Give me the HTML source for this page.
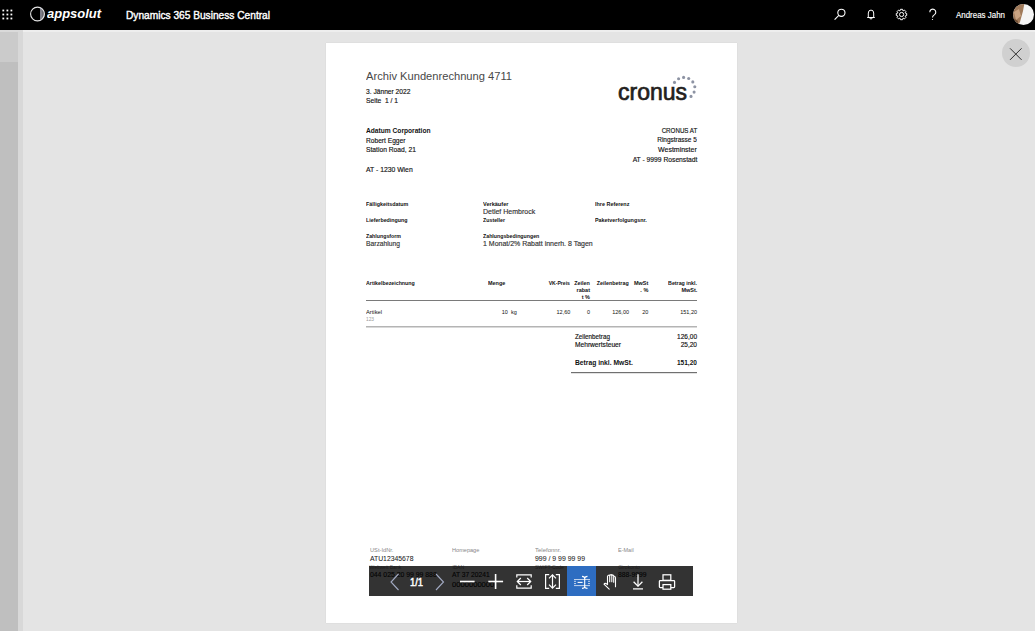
<!DOCTYPE html>
<html><head><meta charset="utf-8">
<style>
*{margin:0;padding:0;box-sizing:border-box}
html,body{width:1035px;height:631px;overflow:hidden;background:#e4e4e4;font-family:"Liberation Sans",sans-serif;color:#1e1e1e}
.a{position:absolute}
.t{position:absolute;white-space:pre;line-height:1.1172;color:#111;-webkit-text-stroke:0.15px currentColor}
#hdr{left:0;top:0;width:1035px;height:30px;background:#000}
</style></head><body>
<div class="a" id="hdr"></div>
<div class="a" style="left:23px;top:30px;width:1012px;height:2px;background:#eeeeee"></div>
<div class="a" style="left:0;top:30px;width:23px;height:2px;background:#dadada"></div>
<div class="a" style="left:0;top:32px;width:17.5px;height:30px;background:#cbcbcb"></div>
<div class="a" style="left:0;top:62px;width:17.5px;height:569px;background:#bfbfbf"></div>
<div class="a" style="left:17.5px;top:32px;width:5.5px;height:599px;background:#d8d8d8"></div>
<!-- page -->
<div class="a" style="left:326px;top:43px;width:411px;height:580px;background:#fff;box-shadow:0 0 1px rgba(0,0,0,0.12)"></div>
<!-- close -->
<div class="a" style="left:1001.6px;top:39.2px;width:28px;height:28px;border-radius:50%;background:#d0d0d0"></div>
<svg class="a" style="left:0;top:0" width="1035" height="631">
  <g stroke="#2e2e2e" stroke-width="1" fill="none">
    <line x1="1010" y1="48.3" x2="1021.6" y2="59.9"/><line x1="1021.6" y1="48.3" x2="1010" y2="59.9"/>
  </g>
  <!-- waffle -->
  <g fill="#fff"><rect x="2.4" y="9.6" width="1.8" height="1.8"/><rect x="6.5" y="9.6" width="1.8" height="1.8"/><rect x="10.5" y="9.6" width="1.8" height="1.8"/><rect x="2.4" y="13.6" width="1.8" height="1.8"/><rect x="6.5" y="13.6" width="1.8" height="1.8"/><rect x="10.5" y="13.6" width="1.8" height="1.8"/><rect x="2.4" y="17.6" width="1.8" height="1.8"/><rect x="6.5" y="17.6" width="1.8" height="1.8"/><rect x="10.5" y="17.6" width="1.8" height="1.8"/></g>
  <!-- appsolut circle -->
  <path d="M40.8 7.7 A7 7 0 0 1 40.8 20.3 Z" fill="#6a6a70"/>
  <circle cx="37.5" cy="14" r="6.9" stroke="#e6e6e6" stroke-width="1.1" fill="none"/>
  <line x1="40.8" y1="7.6" x2="40.8" y2="20.4" stroke="#b8bccc" stroke-width="0.9"/>
  <!-- search -->
  <g stroke="#fff" stroke-width="1.1" fill="none">
    <circle cx="841.4" cy="12.8" r="3.6"/>
    <line x1="838.8" y1="15.4" x2="834.6" y2="19.6"/>
  </g>
  <!-- bell -->
  <g stroke="#fff" stroke-width="1" fill="none">
    <path d="M867.2 17.5 L874.8 17.5 M868.3 17.5 L868.3 13 A2.7 2.9 0 0 1 873.7 13 L873.7 17.5"/>
    <path d="M869.8 17.8 A1.2 1.2 0 0 0 872.2 17.8"/>
  </g>
  <!-- gear -->
  <g stroke="#fff" stroke-width="1" fill="none">
    <path d="M906.69 13.45 L906.69 15.55 L905.24 15.91 L905.14 16.15 L905.92 17.43 L904.43 18.92 L903.15 18.14 L902.91 18.24 L902.55 19.69 L900.45 19.69 L900.09 18.24 L899.85 18.14 L898.57 18.92 L897.08 17.43 L897.86 16.15 L897.76 15.91 L896.31 15.55 L896.31 13.45 L897.76 13.09 L897.86 12.85 L897.08 11.57 L898.57 10.08 L899.85 10.86 L900.09 10.76 L900.45 9.31 L902.55 9.31 L902.91 10.76 L903.15 10.86 L904.43 10.08 L905.92 11.57 L905.14 12.85 L905.24 13.09 Z"/>
    <circle cx="901.6" cy="14.5" r="2.1"/>
  </g>
  <!-- help -->
  <g stroke="#fff" stroke-width="1.1" fill="none">
    <path d="M929.8 12.2 A3 3 0 1 1 934.5 14.6 Q932.5 15.8 932.5 17.5"/>
  </g>
  <circle cx="932.5" cy="19.5" r="0.6" fill="#fff"/>
  <!-- avatar -->
  <defs><clipPath id="av"><circle cx="1023.5" cy="14.5" r="10.5"/></clipPath></defs>
  <g clip-path="url(#av)">
    <rect x="1012" y="3" width="23" height="23" fill="#f4f4f4"/>
    <path d="M1012 3 L1024.5 3 L1023 11 L1020 22 L1018 26 L1012 26 Z" fill="#a07a5a"/>
    <path d="M1014 12 L1019 9 L1021 16 L1016 20 Z" fill="#c9a382"/>
    <path d="M1013 18 L1018 21 L1017 26 L1012 26 Z" fill="#6e4d33"/>
  </g>
  <!-- cronus dots -->
  <g fill="#8d93a3">
    <circle cx="674.5" cy="82.4" r="1.55"/><circle cx="678.6" cy="78.8" r="1.55"/><circle cx="683.6" cy="77.4" r="1.55"/><circle cx="688.7" cy="78.5" r="1.55"/>
    <circle cx="692.8" cy="81.9" r="1.55"/><circle cx="694.8" cy="86.7" r="1.55"/><circle cx="694.1" cy="92.1" r="1.55"/><circle cx="691" cy="96.4" r="1.55"/>
  </g>
  <!-- table lines -->
  <rect x="366" y="300" width="331" height="1" fill="#7a7a7a"/>
  <rect x="366" y="326" width="331" height="1.5" fill="#b4b4b4"/>
  <rect x="571" y="372" width="126" height="1.2" fill="#707070"/>
</svg>
<div class="t" style="top:8.83px;font-size:10.8px;color:#fff;-webkit-text-stroke:0.4px #fff;left:126.00px;transform:scaleX(0.941);transform-origin:0 0;">Dynamics 365 Business Central</div>
<div class="t" style="top:9.66px;font-size:9px;color:#fff;left:956.00px;transform:scaleX(0.882);transform-origin:0 0;">Andreas Jahn</div>
<div class="t" style="top:6.52px;font-size:12.8px;font-weight:700;font-style:italic;color:#fff;-webkit-text-stroke:0;left:46.90px;transform:scaleX(1.013);transform-origin:0 0;">appsolut</div>
<div class="t" style="top:69.55px;font-size:11px;color:#484848;-webkit-text-stroke:0;left:366.00px;transform:scaleX(1.013);transform-origin:0 0;">Archiv Kundenrechnung 4711</div>
<div class="t" style="top:87.87px;font-size:7px;left:366.00px;transform:scaleX(0.951);transform-origin:0 0;">3. Jänner 2022</div>
<div class="t" style="top:97.17px;font-size:7px;left:366.00px;transform:scaleX(0.956);transform-origin:0 0;">Seite  1 / 1</div>
<div class="t" style="top:78.51px;font-size:23.3px;color:#231f20;-webkit-text-stroke:0.7px #231f20;left:618.00px;transform:scaleX(0.987);transform-origin:0 0;">cronus</div>
<div class="t" style="top:126.67px;font-size:7px;font-weight:700;-webkit-text-stroke:0;left:366.00px;transform:scaleX(0.948);transform-origin:0 0;">Adatum Corporation</div>
<div class="t" style="top:136.56px;font-size:7px;left:366.00px;transform:scaleX(0.946);transform-origin:0 0;">Robert Egger</div>
<div class="t" style="top:146.06px;font-size:7px;left:366.00px;transform:scaleX(0.959);transform-origin:0 0;">Station Road, 21</div>
<div class="t" style="top:166.36px;font-size:7px;left:366.00px;transform:scaleX(0.973);transform-origin:0 0;">AT - 1230 Wien</div>
<div class="t" style="top:126.67px;font-size:7px;right:338.00px;transform:scaleX(0.885);transform-origin:100% 0;">CRONUS AT</div>
<div class="t" style="top:135.86px;font-size:7px;right:338.00px;transform:scaleX(0.925);transform-origin:100% 0;">Ringstrasse 5</div>
<div class="t" style="top:145.86px;font-size:7px;right:338.00px;transform:scaleX(0.998);transform-origin:100% 0;">Westminster</div>
<div class="t" style="top:156.26px;font-size:7px;right:338.00px;transform:scaleX(0.961);transform-origin:100% 0;">AT - 9999 Rosenstadt</div>
<div class="t" style="top:201.02px;font-size:5.5px;font-weight:700;-webkit-text-stroke:0;left:366.00px;transform:scaleX(0.975);transform-origin:0 0;">Fälligkeitsdatum</div>
<div class="t" style="top:217.02px;font-size:5.5px;font-weight:700;-webkit-text-stroke:0;left:366.00px;transform:scaleX(0.963);transform-origin:0 0;">Lieferbedingung</div>
<div class="t" style="top:232.92px;font-size:5.5px;font-weight:700;-webkit-text-stroke:0;left:366.00px;transform:scaleX(0.954);transform-origin:0 0;">Zahlungsform</div>
<div class="t" style="top:240.26px;font-size:7px;color:#333;left:366.00px;transform:scaleX(0.960);transform-origin:0 0;">Barzahlung</div>
<div class="t" style="top:200.82px;font-size:5.5px;font-weight:700;-webkit-text-stroke:0;left:483.00px;transform:scaleX(1.013);transform-origin:0 0;">Verkäufer</div>
<div class="t" style="top:208.26px;font-size:7px;color:#333;left:483.00px;transform:scaleX(1.001);transform-origin:0 0;">Detlef Hembrock</div>
<div class="t" style="top:217.02px;font-size:5.5px;font-weight:700;-webkit-text-stroke:0;left:483.00px;transform:scaleX(0.959);transform-origin:0 0;">Zusteller</div>
<div class="t" style="top:232.62px;font-size:5.5px;font-weight:700;-webkit-text-stroke:0;left:483.00px;transform:scaleX(0.955);transform-origin:0 0;">Zahlungsbedingungen</div>
<div class="t" style="top:240.36px;font-size:7px;color:#333;left:483.00px;transform:scaleX(0.997);transform-origin:0 0;">1 Monat/2% Rabatt innerh. 8 Tagen</div>
<div class="t" style="top:201.02px;font-size:5.5px;font-weight:700;-webkit-text-stroke:0;left:595.20px;transform:scaleX(0.987);transform-origin:0 0;">Ihre Referenz</div>
<div class="t" style="top:217.02px;font-size:5.5px;font-weight:700;-webkit-text-stroke:0;left:595.20px;transform:scaleX(0.979);transform-origin:0 0;">Paketverfolgungsnr.</div>
<div class="t" style="top:280.12px;font-size:5.5px;font-weight:700;-webkit-text-stroke:0;left:366.00px;transform:scaleX(0.962);transform-origin:0 0;">Artikelbezeichnung</div>
<div class="t" style="top:280.02px;font-size:5.5px;font-weight:700;-webkit-text-stroke:0;left:488.10px;transform:scaleX(0.993);transform-origin:0 0;">Menge</div>
<div class="t" style="top:280.02px;font-size:5.5px;font-weight:700;-webkit-text-stroke:0;right:464.70px;transform:scaleX(0.929);transform-origin:100% 0;">VK-Preis</div>
<div class="t" style="top:280.02px;font-size:5.5px;font-weight:700;-webkit-text-stroke:0;right:445.00px;transform:scaleX(0.981);transform-origin:100% 0;">Zeilen</div>
<div class="t" style="top:287.12px;font-size:5.5px;font-weight:700;-webkit-text-stroke:0;right:445.00px;">rabat</div>
<div class="t" style="top:293.62px;font-size:5.5px;font-weight:700;-webkit-text-stroke:0;right:445.00px;">t %</div>
<div class="t" style="top:280.02px;font-size:5.5px;font-weight:700;-webkit-text-stroke:0;right:406.00px;transform:scaleX(0.975);transform-origin:100% 0;">Zeilenbetrag</div>
<div class="t" style="top:280.02px;font-size:5.5px;font-weight:700;-webkit-text-stroke:0;right:386.70px;transform:scaleX(1.002);transform-origin:100% 0;">MwSt</div>
<div class="t" style="top:287.12px;font-size:5.5px;font-weight:700;-webkit-text-stroke:0;right:386.70px;">. %</div>
<div class="t" style="top:280.02px;font-size:5.5px;font-weight:700;-webkit-text-stroke:0;right:337.70px;transform:scaleX(0.965);transform-origin:100% 0;">Betrag inkl.</div>
<div class="t" style="top:287.12px;font-size:5.5px;font-weight:700;-webkit-text-stroke:0;right:337.70px;">MwSt.</div>
<div class="t" style="top:309.12px;font-size:5.5px;-webkit-text-stroke:0;left:366.00px;transform:scaleX(1.047);transform-origin:0 0;">Artikel</div>
<div class="t" style="top:315.82px;font-size:5.5px;color:#999;-webkit-text-stroke:0;left:366.00px;transform:scaleX(0.871);transform-origin:0 0;">123</div>
<div class="t" style="top:309.12px;font-size:5.5px;-webkit-text-stroke:0;right:527.20px;">10</div>
<div class="t" style="top:309.12px;font-size:5.5px;-webkit-text-stroke:0;left:511.00px;">kg</div>
<div class="t" style="top:309.12px;font-size:5.5px;-webkit-text-stroke:0;right:464.70px;">12,60</div>
<div class="t" style="top:309.12px;font-size:5.5px;-webkit-text-stroke:0;right:445.00px;">0</div>
<div class="t" style="top:309.12px;font-size:5.5px;-webkit-text-stroke:0;right:406.00px;">126,00</div>
<div class="t" style="top:309.12px;font-size:5.5px;-webkit-text-stroke:0;right:386.70px;">20</div>
<div class="t" style="top:309.12px;font-size:5.5px;-webkit-text-stroke:0;right:338.00px;">151,20</div>
<div class="t" style="top:332.92px;font-size:6.5px;left:574.50px;transform:scaleX(0.966);transform-origin:0 0;">Zeilenbetrag</div>
<div class="t" style="top:332.92px;font-size:6.5px;right:338.00px;">126,00</div>
<div class="t" style="top:341.12px;font-size:6.5px;left:574.50px;transform:scaleX(1.019);transform-origin:0 0;">Mehrwertsteuer</div>
<div class="t" style="top:341.12px;font-size:6.5px;right:338.00px;">25,20</div>
<div class="t" style="top:358.51px;font-size:7.5px;font-weight:700;-webkit-text-stroke:0;left:574.50px;transform:scaleX(0.895);transform-origin:0 0;">Betrag inkl. MwSt.</div>
<div class="t" style="top:358.51px;font-size:7.5px;font-weight:700;-webkit-text-stroke:0;right:338.00px;transform:scaleX(0.871);transform-origin:100% 0;">151,20</div>
<div class="t" style="top:548.08px;font-size:5px;color:#888;-webkit-text-stroke:0;left:369.60px;transform:scaleX(1.138);transform-origin:0 0;">USt-IdNr.</div>
<div class="t" style="top:554.66px;font-size:7px;color:#1a1a1a;-webkit-text-stroke:0.05px #1a1a1a;left:369.60px;transform:scaleX(0.973);transform-origin:0 0;">ATU12345678</div>
<div class="t" style="top:548.08px;font-size:5px;color:#888;-webkit-text-stroke:0;left:452.40px;transform:scaleX(1.116);transform-origin:0 0;">Homepage</div>
<div class="t" style="top:548.08px;font-size:5px;color:#888;-webkit-text-stroke:0;left:535.00px;transform:scaleX(1.199);transform-origin:0 0;">Telefonnr.</div>
<div class="t" style="top:554.66px;font-size:7px;color:#1a1a1a;-webkit-text-stroke:0.05px #1a1a1a;left:535.00px;transform:scaleX(0.988);transform-origin:0 0;">999 / 9 99 99 99</div>
<div class="t" style="top:548.08px;font-size:5px;color:#888;-webkit-text-stroke:0;left:618.20px;transform:scaleX(1.101);transform-origin:0 0;">E-Mail</div>
<div class="t" style="top:564.77px;font-size:5px;color:#888;-webkit-text-stroke:0;left:369.60px;">Weltweit Bank</div>
<div class="t" style="top:564.77px;font-size:5px;color:#888;-webkit-text-stroke:0;left:452.40px;">IBAN</div>
<div class="t" style="top:564.77px;font-size:5px;color:#888;-webkit-text-stroke:0;left:535.00px;">SWIFT-Code</div>
<div class="t" style="top:564.77px;font-size:5px;color:#888;-webkit-text-stroke:0;left:618.20px;">Girokonto</div>
<div class="t" style="top:571.21px;font-size:7.5px;left:369.60px;transform:scaleX(0.914);transform-origin:0 0;">044 025 20 99 99 888</div>
<div class="t" style="top:571.21px;font-size:7.5px;left:452.00px;transform:scaleX(0.890);transform-origin:0 0;">AT 37 20241</div>
<div class="t" style="top:580.71px;font-size:7.5px;left:452.00px;transform:scaleX(1.014);transform-origin:0 0;">0000000000</div>
<div class="t" style="top:571.21px;font-size:7.5px;left:618.20px;transform:scaleX(0.896);transform-origin:0 0;">888-9999</div>
<!-- toolbar -->
<div class="a" style="left:369px;top:566.4px;width:324px;height:29.4px;background:rgba(0,0,0,0.8)"></div>
<div class="a" style="left:567px;top:566.4px;width:29px;height:29.4px;background:#2e6dc1"></div>
<svg class="a" style="left:0;top:0" width="1035" height="631">
  <g stroke="#a3abc4" stroke-width="1.1" fill="none">
    <polyline points="398.5,574 391,582 398.5,590"/>
    <polyline points="436,574 443.5,582 436,590"/>
  </g>
  <g stroke="#fff" stroke-width="1.6" fill="none">
    <line x1="460" y1="581.5" x2="474.6" y2="581.5"/>
    <line x1="488.3" y1="581.5" x2="503.1" y2="581.5"/>
    <line x1="495.6" y1="574" x2="495.6" y2="589"/>
  </g>
  <g stroke="#fff" stroke-width="1.2" fill="none">
    <!-- fit width -->
    <polyline points="516.8,577.6 516.8,574.8 531.2,574.8 531.2,577.6"/>
    <polyline points="516.8,585.2 516.8,588.2 531.2,588.2 531.2,585.2"/>
    <line x1="517.3" y1="581.5" x2="530.7" y2="581.5"/>
    <polyline points="520.8,578 517.3,581.5 520.8,585"/>
    <polyline points="527.2,578 530.7,581.5 527.2,585"/>
    <!-- fit page -->
    <polyline points="549.2,574.6 545.6,574.6 545.6,588.4 549.2,588.4"/>
    <polyline points="555.8,574.6 559.4,574.6 559.4,588.4 555.8,588.4"/>
    <line x1="552.5" y1="574.8" x2="552.5" y2="588.2"/>
    <polyline points="549,578.3 552.5,574.8 556,578.3"/>
    <polyline points="549,584.7 552.5,588.2 556,584.7"/>
  </g>
  <g stroke="#fff" stroke-width="1" fill="none">
    <!-- text select -->
    <g stroke-width="0.8" stroke="#e8eef8">
    <line x1="574" y1="579.5" x2="590" y2="579.5"/><line x1="574" y1="585.6" x2="590" y2="585.6"/>
    <line x1="574" y1="581.3" x2="576" y2="581.3"/><line x1="574" y1="583.6" x2="576" y2="583.6"/>
    <line x1="588" y1="581.3" x2="590" y2="581.3"/><line x1="588" y1="583.6" x2="590" y2="583.6"/>
    </g>
    <line x1="577.6" y1="582.4" x2="582.6" y2="582.4" stroke-width="1.1"/>
    <path stroke-width="1.1" d="M582 576.4 Q584.7 576.6 584.7 578.5 L584.7 586.5 Q584.7 588.3 582 588.4 M587.5 576.4 Q584.7 576.6 584.7 578.5 M584.7 586.5 Q584.7 588.3 587.5 588.4"/>
    <!-- hand -->
    <path stroke-width="1.1" stroke-linejoin="round" stroke-linecap="round" d="M609.2 589.2 L604 584.2 Q604.6 582.9 606 583.5 L607.5 584.6 L607.5 576.3 Q608.3 574.6 610 575.2 Q611 574.2 612.2 574.9 Q613.4 575 613.8 576 Q615.4 576.1 615.5 577.8 L615.5 586.8 M609.7 575.6 L609.7 581.8 M611.8 575.1 L611.8 581.8 M613.7 576.3 L613.7 582.2"/>
    <!-- download -->
    <g stroke-width="1.25">
    <line x1="638" y1="574.3" x2="638" y2="586.3"/>
    <polyline points="633.6,581.8 638,586.2 642.4,581.8"/>
    <line x1="633" y1="588.9" x2="643" y2="588.9"/>
    <!-- printer -->
    <rect x="663" y="574.8" width="7.8" height="5.5"/>
    <rect x="659.4" y="580.5" width="15.2" height="7" rx="0.8"/>
    <rect x="663" y="584.6" width="7.8" height="4.6" fill="#333"/>
    </g>
  </g>
</svg>
<div class="t" style="top:576.55px;font-size:10px;color:#fff;-webkit-text-stroke:0.45px #fff;left:410.20px;transform:scaleX(0.942);transform-origin:0 0;">1/1</div>
</body></html>
